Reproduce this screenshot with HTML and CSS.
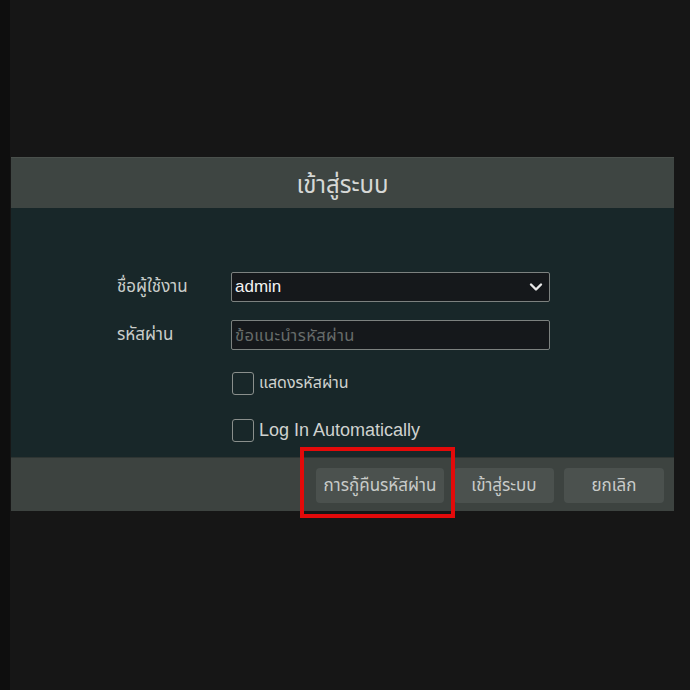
FILE: index.html
```html
<!DOCTYPE html>
<html lang="th">
<head>
<meta charset="utf-8">
<link rel="stylesheet" href="styles.css">
</head>
<body>
<div class="screen">
  <div class="dialog">
    <div class="dlg-header">เข้าสู่ระบบ</div>
    <div class="dlg-body">
      <div class="form">
        <div class="label">ชื่อผู้ใช้งาน</div>
        <div class="field select">
          <span class="value">admin</span>
          <svg class="chev" width="14" height="10" viewBox="0 0 14 10"><path d="M2 2.5 L7 7.5 L12 2.5" fill="none" stroke="#e8e8e8" stroke-width="2.4" stroke-linecap="round" stroke-linejoin="round"/></svg>
        </div>
        <div class="label">รหัสผ่าน</div>
        <div class="field input"><span class="placeholder">ข้อแนะนำรหัสผ่าน</span></div>
        <div class="spacer"></div>
        <div class="check"><span class="box"></span><span class="ctext th">แสดงรหัสผ่าน</span></div>
        <div class="spacer"></div>
        <div class="check second"><span class="box"></span><span class="ctext">Log In Automatically</span></div>
      </div>
    </div>
    <div class="dlg-footer">
      <button class="btn wide">การกู้คืนรหัสผ่าน</button>
      <button class="btn">เข้าสู่ระบบ</button>
      <button class="btn">ยกเลิก</button>
      <div class="highlight"></div>
    </div>
  </div>
</div>
</body>
</html>
```

FILE: styles.css
```css
html, body {
  margin: 0;
  padding: 0;
  background: #161616;
  width: 690px;
  height: 690px;
  overflow: hidden;
  font-family: "Noto Sans Thai", "Noto Sans", "Liberation Sans", sans-serif;
}
.screen {
  height: 690px;
  padding: 157px 0 0 11px;
  box-sizing: border-box;
  background: linear-gradient(to right, #0e0e0e 0, #0e0e0e 10px, #161616 10px);
}
.dialog {
  width: 663px;
  position: relative;
}
.dlg-header {
  height: 51px;
  background: #3e4542;
  color: #d6d8d6;
  font-size: 24px;
  display: flex;
  align-items: center;
  justify-content: center;
  box-sizing: border-box;
  padding-top: 5px;
  border-top: 1px solid #4a504c;
}
.dlg-body {
  background: #182729;
  height: 249px;
  box-sizing: border-box;
  padding: 64px 0 0 106px;
}
.form {
  display: grid;
  grid-template-columns: 114px 319px;
  align-items: center;
}
.label {
  color: #c9cdca;
  font-size: 17px;
  height: 30px;
  line-height: 30px;
}
.field {
  height: 30px;
  box-sizing: border-box;
  border: 1px solid #7c817f;
  border-radius: 2px;
  background: #15181b;
  display: flex;
  align-items: center;
  padding: 0 6px 0 3px;
}
.field.input { margin-top: 18px; }
.label + .field + .label { margin-top: 18px; }
.select { justify-content: space-between; }
.value {
  color: #f2f2f2;
  font-size: 17px;
  font-family: "Liberation Sans", "Noto Sans", sans-serif;
}
.placeholder {
  color: #676c6a;
  font-size: 16.5px;
  letter-spacing: 0.4px;
}
.spacer { height: 1px; }
.check {
  display: flex;
  align-items: center;
  gap: 5px;
  margin-top: 21px;
}
.check.second { margin-top: 24px; }
.box {
  width: 22px;
  height: 23px;
  box-sizing: border-box;
  border: 1.5px solid #8a8f8c;
  border-radius: 3px;
  margin-left: 1px;
}
.ctext {
  color: #cfd2cf;
  font-size: 18px;
  font-family: "Liberation Sans", "Noto Sans", sans-serif;
}
.ctext.th {
  font-family: "Noto Sans Thai", "Noto Sans", sans-serif;
  font-size: 16px;
}
.dlg-footer {
  background: #3d4340;
  height: 54px;
  box-sizing: border-box;
  padding: 10px 10px 0 0;
  display: flex;
  justify-content: flex-end;
  align-items: flex-start;
  gap: 10px;
  position: relative;
  border-top: 1px solid #2e3533;
}
.btn {
  width: 100px;
  height: 35px;
  background: #4b514e;
  border: none;
  border-radius: 4px;
  color: #c8cbc9;
  font-size: 17px;
  font-family: "Noto Sans Thai", "Noto Sans", sans-serif;
  padding: 0;
  white-space: nowrap;
}
.btn.wide { width: 128px; }
.highlight {
  position: absolute;
  left: 289px;
  top: -11px;
  width: 155px;
  height: 71px;
  box-sizing: border-box;
  border: 4px solid #e30a0a;
}
```
